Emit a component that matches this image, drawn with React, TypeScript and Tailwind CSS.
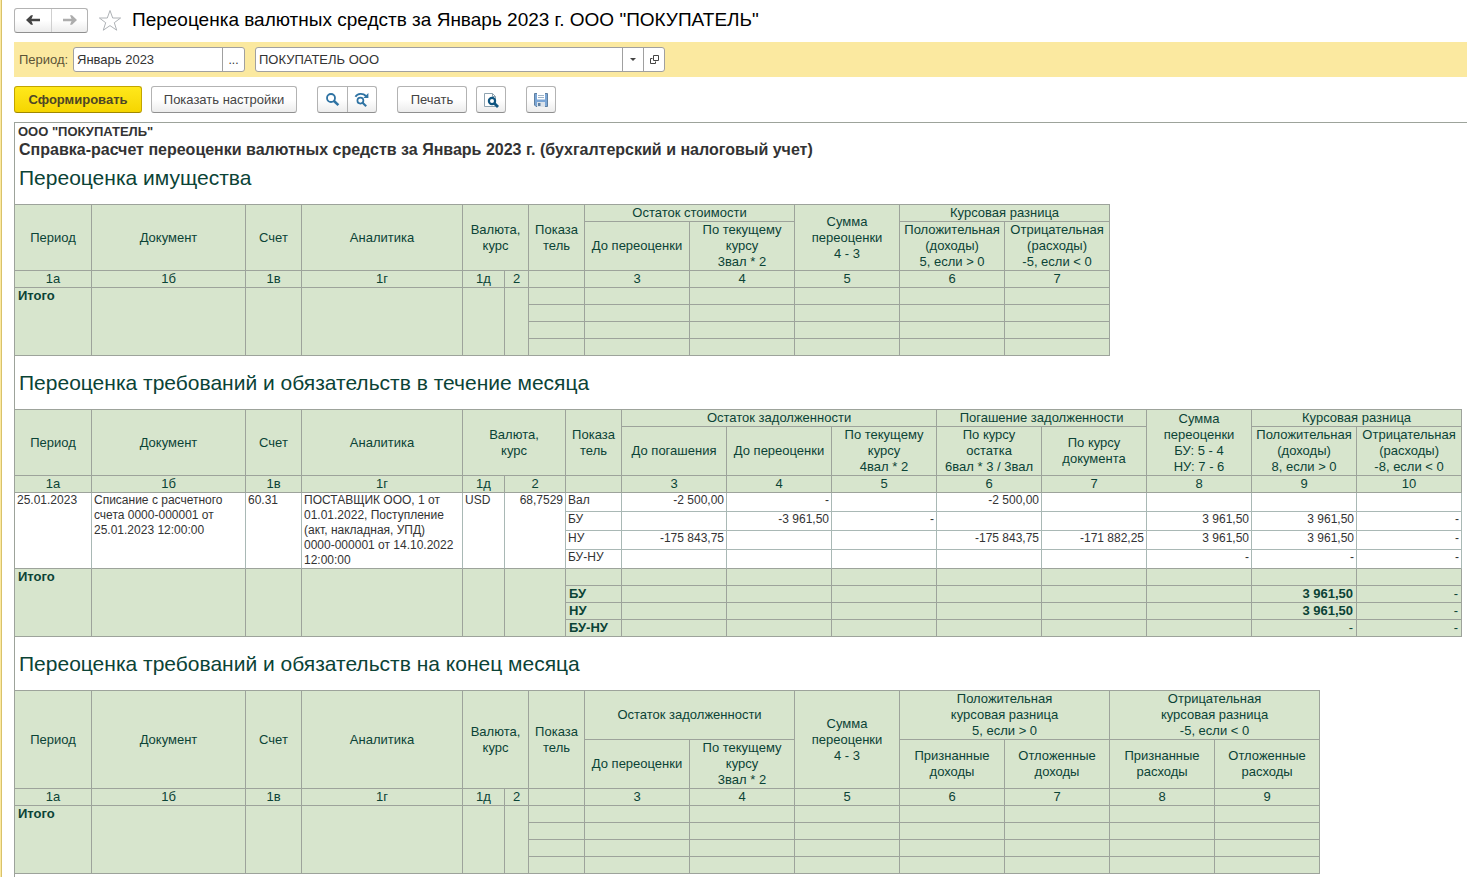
import type { ReactNode } from "react";

type HeadCell = { lines: string[]; cols?: number; rows?: number };

const GRID = "border-r border-b border-[#9da39b]";
const HEAD = `${GRID} bg-[#d7e5cd] p-0 text-center align-middle font-normal text-[#0b4336]`;
const TOTAL = `${GRID} bg-[#d7e5cd] px-[3px] py-0 font-bold text-[#0b4336]`;
const DATA = "border-r border-b border-r-[#a9b8b5] bg-white px-[2px] py-0 align-top text-[12px] leading-[15px] text-[#333333]";
const SECTION = "pb-2 pl-1 text-[21px] leading-9 text-[#0b4336]";

function Lines({ lines }: { lines: string[] }) {
  return (
    <>
      {lines.map((line) => (
        <span key={line} className="block">
          {line}
        </span>
      ))}
    </>
  );
}

function HeadRow({ cells, className }: { cells: HeadCell[]; className: string }) {
  return (
    <tr className={className}>
      {cells.map((cell, i) => (
        <th key={i} colSpan={cell.cols} rowSpan={cell.rows} className={HEAD}>
          <Lines lines={cell.lines} />
        </th>
      ))}
    </tr>
  );
}

function ReportTable({ label, rateCol, valueCols, children }: { label: string; rateCol: string; valueCols: number; children: ReactNode }) {
  return (
    <table
      aria-label={label}
      className="w-px table-fixed border-separate border-spacing-0 border-t border-[#9da39b] text-[13px] leading-[16px]"
    >
      <colgroup>
        <col className="w-[77px]" />
        <col className="w-[154px]" />
        <col className="w-[56px]" />
        <col className="w-[161px]" />
        <col className="w-[42px]" />
        <col className={rateCol} />
        <col className="w-[56px]" />
        {Array.from({ length: valueCols }, (_, i) => (
          <col key={i} className="w-[105px]" />
        ))}
      </colgroup>
      {children}
    </table>
  );
}

function TotalRows({ rows }: { rows: string[][] }) {
  return (
    <tbody>
      {rows.map((row, r) => (
        <tr key={r} className="h-[17px]">
          {r === 0 && (
            <>
              <th scope="row" rowSpan={rows.length} className={`${TOTAL} text-left align-top`}>
                Итого
              </th>
              {[1, 2, 3, 4, 5].map((c) => (
                <td key={c} rowSpan={rows.length} className={TOTAL} />
              ))}
            </>
          )}
          {row.map((value, c) => (
            <td key={c} className={`${TOTAL} ${c === 0 ? "text-left" : "text-right"}`}>
              {value === "-" ? <span className="font-normal">-</span> : value}
            </td>
          ))}
        </tr>
      ))}
    </tbody>
  );
}

const leading: HeadCell[] = [
  { lines: ["Период"], rows: 2 },
  { lines: ["Документ"], rows: 2 },
  { lines: ["Счет"], rows: 2 },
  { lines: ["Аналитика"], rows: 2 },
  { lines: ["Валюта,", "курс"], rows: 2, cols: 2 },
  { lines: ["Показа", "тель"], rows: 2 },
];

const numbers = (count: number): HeadCell[] =>
  ["1а", "1б", "1в", "1г", "1д", "2", "", ...Array.from({ length: count }, (_, i) => String(i + 3))].map((n) => ({ lines: [n] }));

const empty = (count: number) => Array.from({ length: count + 1 }, () => "");

const entries = [
  ["Вал", "-2 500,00", "-", "", "-2 500,00", "", "", "", ""],
  ["БУ", "", "-3 961,50", "-", "", "", "3 961,50", "3 961,50", "-"],
  ["НУ", "-175 843,75", "", "", "-175 843,75", "-171 882,25", "3 961,50", "3 961,50", "-"],
  ["БУ-НУ", "", "", "", "", "", "-", "-", "-"],
];

const entryInfo = [
  ["25.01.2023"],
  ["Списание с расчетного", "счета 0000-000001 от", "25.01.2023 12:00:00"],
  ["60.31"],
  ["ПОСТАВЩИК ООО, 1 от", "01.01.2022, Поступление", "(акт, накладная, УПД)", "0000-000001 от 14.10.2022", "12:00:00"],
  ["USD"],
  ["68,7529"],
];

const BUTTON =
  "flex h-[27px] items-center justify-center rounded-[3px] border border-[#b3b3b3] border-b-[#8f8f8f] bg-gradient-to-b from-white from-50% to-[#ececec] text-[13px] text-[#444444]";
const GROUP =
  "flex overflow-hidden rounded-[3px] border border-[#b3b3b3] border-b-[#8f8f8f] bg-gradient-to-b from-white from-50% to-[#ececec]";

function Arrow({ className, flip }: { className: string; flip?: boolean }) {
  return (
    <svg viewBox="0 0 14 10" className={`h-[10px] w-[14px] ${className}`} aria-hidden="true">
      <g transform={flip ? "matrix(-1 0 0 1 14 0)" : undefined} fill="currentColor">
        <path d="M3 3.8H14V6.2H3Z" />
        <path d="M0 5L5 0.2H7L5 5L7 9.8H5Z" />
      </g>
    </svg>
  );
}

function Star() {
  return (
    <svg viewBox="0 0 24 23" className="h-[23px] w-[24px]" aria-hidden="true">
      <path
        d="M12 1.5L14.7 9H22.6L16.3 13.7L18.7 21.2L12 16.6L5.3 21.2L7.7 13.7L1.4 9H9.3Z"
        fill="white"
        stroke="#aeb2b6"
        strokeWidth="1"
      />
    </svg>
  );
}

function FindIcon() {
  return (
    <svg viewBox="0 0 16 16" className="size-4" fill="none" stroke="#2f73a3" aria-hidden="true">
      <circle cx="6" cy="6" r="4" strokeWidth="1.8" />
      <path d="M9 9L13.4 13.2" strokeWidth="2.5" />
    </svg>
  );
}

function FindNextIcon() {
  return (
    <svg viewBox="0 0 16 16" className="size-4" fill="none" stroke="#2f73a3" aria-hidden="true">
      <circle cx="6.4" cy="8.6" r="3" strokeWidth="1.7" />
      <path d="M8.6 10.8L12.2 14.2" strokeWidth="2.2" />
      <path d="M1.4 4.8C3.6 1 9 0.9 12 4" strokeWidth="1.8" />
      <path d="M14.4 1V6H9.4Z" fill="#2f73a3" stroke="none" />
    </svg>
  );
}

function PreviewIcon() {
  return (
    <svg viewBox="0 0 16 16" className="size-4" fill="none" aria-hidden="true">
      <path d="M1.5 1.5H9.5L12.5 4.5V14.5H1.5Z" fill="white" stroke="#8fa3b0" />
      <path d="M9.5 1.5V4.5H12.5" stroke="#8fa3b0" />
      <circle cx="9" cy="9" r="3.1" fill="white" stroke="#0f5580" strokeWidth="2.2" />
      <path d="M11 11L15 15" stroke="#0f5580" strokeWidth="2.8" />
    </svg>
  );
}

function SaveIcon() {
  return (
    <svg viewBox="0 0 16 16" className="size-4" fill="none" aria-hidden="true">
      <path d="M1.5 1.5H14.5V14.5H3L1.5 13Z" fill="#7ba6d6" stroke="#5f7f9f" />
      <path d="M4 1H12V7.5H4Z" fill="white" />
      <path d="M5 3.5H11M5 5.5H11" stroke="#9fb4c8" />
      <path d="M4 10H12V15H4Z" fill="#dce3ea" />
      <path d="M5 11H7.5V14H5Z" fill="#5f7f9f" />
    </svg>
  );
}

function OpenIcon() {
  return (
    <svg viewBox="0 0 9 9" className="size-[9px]" fill="none" stroke="#444444" aria-hidden="true">
      <path d="M3.5 0.5H8.5V5.5H3.5Z" />
      <path d="M2.5 3.5H0.5V8.5H5.5V6.5" />
    </svg>
  );
}

export default function App() {
  return (
    <div className="flex min-h-screen flex-col border-l border-[#fbe9a0] bg-white font-['Liberation_Sans',Arial,sans-serif]">
      <div className="flex grow flex-col border-l border-[#d9c26a] pl-3">
        <header className="flex h-[42px] items-center pb-[2px]">
          <nav className={GROUP} aria-label="История">
            <button type="button" aria-label="Назад" className="flex h-[23px] w-9 items-center justify-center">
              <Arrow className="text-[#444444]" />
            </button>
            <button type="button" aria-label="Вперед" className="flex h-[23px] w-9 items-center justify-center border-l border-[#cfcfcf]">
              <Arrow flip className="text-[#adadad]" />
            </button>
          </nav>
          <button type="button" aria-label="Добавить в избранное" className="ml-[10px]">
            <Star />
          </button>
          <h1 className="ml-[10px] text-[19px] leading-[24px] whitespace-nowrap text-black">
            Переоценка валютных средств за Январь 2023 г. ООО "ПОКУПАТЕЛЬ"
          </h1>
        </header>

        <div className="flex h-[35px] items-center bg-[#fbe9a0] pl-[5px] text-[13px]">
          <label htmlFor="period" className="w-[54px] text-[#5c5437]">
            Период:
          </label>
          <div className="flex h-[25px] w-[172px] overflow-hidden rounded-[3px] border border-[#a0a0a0] bg-white text-[#333333]">
            <input id="period" defaultValue="Январь 2023" className="min-w-0 grow px-[3px] outline-none" />
            <button type="button" aria-label="Выбрать период" className="w-[22px] shrink-0 border-l border-[#a0a0a0] text-[12px]">
              ...
            </button>
          </div>
          <div className="ml-[10px] flex h-[25px] w-[410px] overflow-hidden rounded-[3px] border border-[#a0a0a0] bg-white text-[#333333]">
            <input aria-label="Организация" defaultValue="ПОКУПАТЕЛЬ ООО" className="min-w-0 grow px-[3px] outline-none" />
            <button type="button" aria-label="Показать список" className="flex w-[21px] shrink-0 items-center justify-center border-l border-[#a0a0a0]">
              <svg viewBox="0 0 6 3" className="h-[3px] w-[6px]" aria-hidden="true">
                <path d="M0 0H6L3 3Z" fill="#444444" />
              </svg>
            </button>
            <button type="button" aria-label="Открыть" className="flex w-[21px] shrink-0 items-center justify-center border-l border-[#a0a0a0]">
              <OpenIcon />
            </button>
          </div>
        </div>

        <div className="flex h-[45px] items-center">
          <button
            type="button"
            className="flex h-[27px] w-[128px] items-center justify-center rounded-[3px] border border-[#c2a500] border-b-[#a08800] bg-gradient-to-b from-[#ffe81a] to-[#f5d500] text-[13px] font-bold text-[#4d4526]"
          >
            Сформировать
          </button>
          <button type="button" className={`${BUTTON} ml-[9px] w-[146px]`}>
            Показать настройки
          </button>
          <div className={`${GROUP} ml-5`}>
            <button type="button" aria-label="Найти" className="flex h-[25px] w-[29px] items-center justify-center">
              <FindIcon />
            </button>
            <button type="button" aria-label="Найти далее" className="flex h-[25px] w-[29px] items-center justify-center border-l border-[#b3b3b3]">
              <FindNextIcon />
            </button>
          </div>
          <button type="button" className={`${BUTTON} ml-5 w-[70px]`}>
            Печать
          </button>
          <button type="button" aria-label="Предварительный просмотр" className={`${BUTTON} ml-[9px] w-[30px]`}>
            <PreviewIcon />
          </button>
          <button type="button" aria-label="Сохранить" className={`${BUTTON} ml-5 w-[30px]`}>
            <SaveIcon />
          </button>
        </div>

        <main className="grow border-t border-l border-[#9da39b]">
          <p className="pl-[3px] text-[13px] leading-[17px] font-bold text-[#333333]">ООО "ПОКУПАТЕЛЬ"</p>
          <h2 className="pl-1 text-[16px] leading-5 font-bold text-[#333333]">
            Справка-расчет переоценки валютных средств за Январь 2023 г. (бухгалтерский и налоговый учет)
          </h2>

          <h3 className={SECTION}>Переоценка имущества</h3>
          <ReportTable label="Переоценка имущества" rateCol="w-[24px]" valueCols={5}>
            <thead>
              <HeadRow
                className="h-[17px]"
                cells={[
                  ...leading,
                  { lines: ["Остаток стоимости"], cols: 2 },
                  { lines: ["Сумма", "переоценки", "4 - 3"], rows: 2 },
                  { lines: ["Курсовая разница"], cols: 2 },
                ]}
              />
              <HeadRow
                className="h-[49px]"
                cells={[
                  { lines: ["До переоценки"] },
                  { lines: ["По текущему", "курсу", "3вал * 2"] },
                  { lines: ["Положительная", "(доходы)", "5, если > 0"] },
                  { lines: ["Отрицательная", "(расходы)", "-5, если < 0"] },
                ]}
              />
              <HeadRow className="h-[17px]" cells={numbers(5)} />
            </thead>
            <TotalRows rows={[empty(5), empty(5), empty(5), empty(5)]} />
          </ReportTable>

          <h3 className={`${SECTION} pt-[9px]`}>Переоценка требований и обязательств в течение месяца</h3>
          <ReportTable label="Переоценка требований и обязательств в течение месяца" rateCol="w-[61px]" valueCols={8}>
            <thead>
              <HeadRow
                className="h-[17px]"
                cells={[
                  ...leading,
                  { lines: ["Остаток задолженности"], cols: 3 },
                  { lines: ["Погашение задолженности"], cols: 2 },
                  { lines: ["Сумма", "переоценки", "БУ: 5 - 4", "НУ: 7 - 6"], rows: 2 },
                  { lines: ["Курсовая разница"], cols: 2 },
                ]}
              />
              <HeadRow
                className="h-[49px]"
                cells={[
                  { lines: ["До погашения"] },
                  { lines: ["До переоценки"] },
                  { lines: ["По текущему", "курсу", "4вал * 2"] },
                  { lines: ["По курсу", "остатка", "6вал * 3 / 3вал"] },
                  { lines: ["По курсу", "документа"] },
                  { lines: ["Положительная", "(доходы)", "8, если > 0"] },
                  { lines: ["Отрицательная", "(расходы)", "-8, если < 0"] },
                ]}
              />
              <HeadRow className="h-[17px]" cells={numbers(8)} />
            </thead>
            <tbody>
              {entries.map((row, r) => (
                <tr key={r} className="h-[19px]">
                  {r === 0 &&
                    entryInfo.map((lines, c) => (
                      <td key={c} rowSpan={4} className={`${DATA} border-b-[#9da39b] ${c === 5 ? "text-right" : "text-left"}`}>
                        <Lines lines={lines} />
                      </td>
                    ))}
                  {row.map((value, c) => (
                    <td
                      key={c}
                      className={`${DATA} ${r === 3 ? "border-b-[#9da39b]" : "border-b-[#a9b8b5]"} ${c === 0 ? "text-left" : "text-right"}`}
                    >
                      {value}
                    </td>
                  ))}
                </tr>
              ))}
            </tbody>
            <TotalRows
              rows={[
                empty(8),
                ["БУ", "", "", "", "", "", "", "3 961,50", "-"],
                ["НУ", "", "", "", "", "", "", "3 961,50", "-"],
                ["БУ-НУ", "", "", "", "", "", "", "-", "-"],
              ]}
            />
          </ReportTable>

          <h3 className={`${SECTION} pt-[9px]`}>Переоценка требований и обязательств на конец месяца</h3>
          <ReportTable label="Переоценка требований и обязательств на конец месяца" rateCol="w-[24px]" valueCols={7}>
            <thead>
              <HeadRow
                className="h-[49px]"
                cells={[
                  ...leading,
                  { lines: ["Остаток задолженности"], cols: 2 },
                  { lines: ["Сумма", "переоценки", "4 - 3"], rows: 2 },
                  { lines: ["Положительная", "курсовая разница", "5, если > 0"], cols: 2 },
                  { lines: ["Отрицательная", "курсовая разница", "-5, если < 0"], cols: 2 },
                ]}
              />
              <HeadRow
                className="h-[49px]"
                cells={[
                  { lines: ["До переоценки"] },
                  { lines: ["По текущему", "курсу", "3вал * 2"] },
                  { lines: ["Признанные", "доходы"] },
                  { lines: ["Отложенные", "доходы"] },
                  { lines: ["Признанные", "расходы"] },
                  { lines: ["Отложенные", "расходы"] },
                ]}
              />
              <HeadRow className="h-[17px]" cells={numbers(7)} />
            </thead>
            <TotalRows rows={[empty(7), empty(7), empty(7), empty(7)]} />
          </ReportTable>
        </main>
      </div>
    </div>
  );
}
